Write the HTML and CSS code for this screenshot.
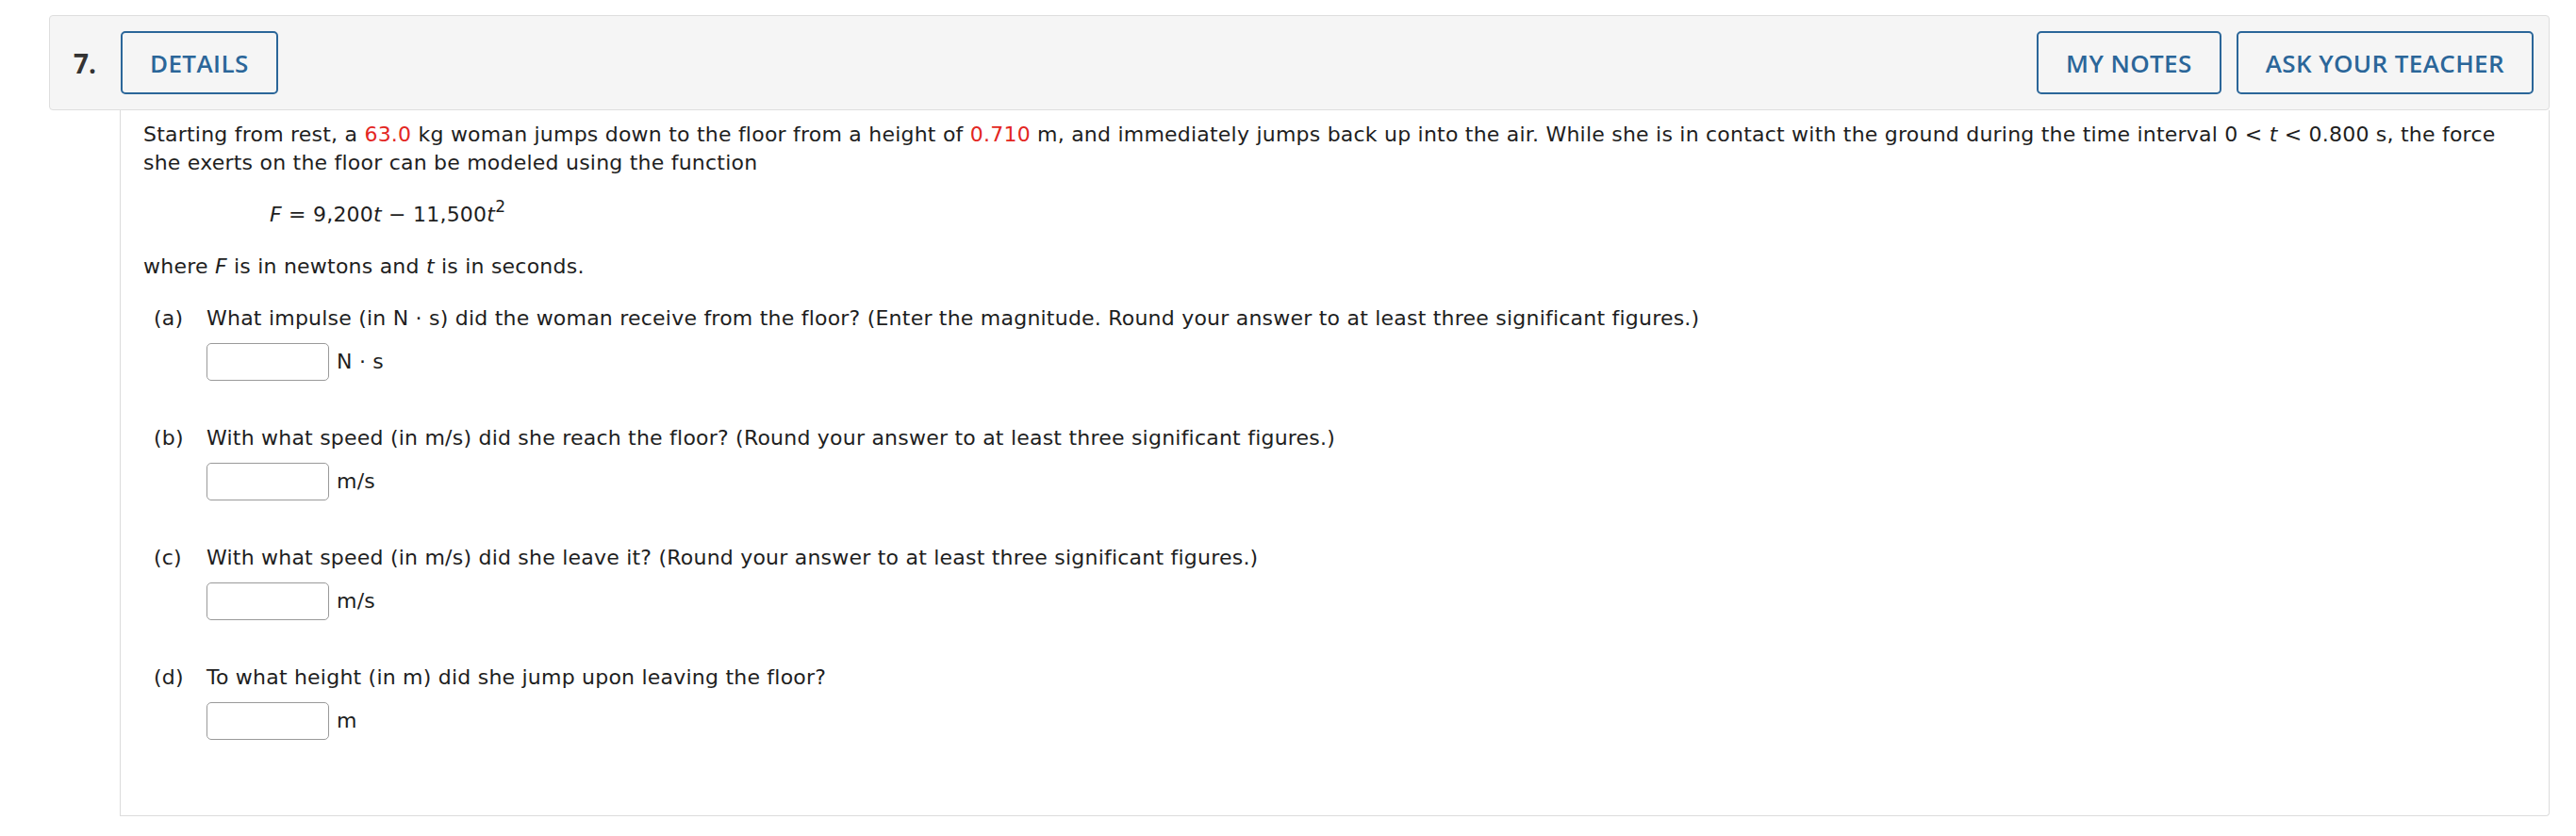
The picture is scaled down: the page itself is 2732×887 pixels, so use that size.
FILE: index.html
```html
<!DOCTYPE html>
<html lang="en">
<head>
<meta charset="utf-8">
<title>Question 7</title>
<link rel="stylesheet" href="styles.css">
</head>
<body>
<div class="question">
  <div class="q-header">
    <div class="q-num">7.</div>
    <button class="q-btn">DETAILS</button>
    <div class="q-actions">
      <button class="q-btn">MY NOTES</button>
      <button class="q-btn">ASK YOUR TEACHER</button>
    </div>
  </div>
  <div class="q-body">
    <p class="q-text">Starting from rest, a <span class="red">63.0</span> kg woman jumps down to the floor from a height of <span class="red">0.710</span> m, and immediately jumps back up into the air. While she is in contact with the ground during the time interval 0 &lt; <i>t</i> &lt; 0.800 s, the force she exerts on the floor can be modeled using the function</p>
    <p class="q-formula"><i>F</i> = 9,200<i>t</i> − 11,500<i>t</i><sup>2</sup></p>
    <p class="q-text">where <i>F</i> is in newtons and <i>t</i> is in seconds.</p>

    <div class="part">
      <div class="part-q"><span class="part-label">(a)</span><span class="part-text">What impulse (in N · s) did the woman receive from the floor? (Enter the magnitude. Round your answer to at least three significant figures.)</span></div>
      <div class="answer"><input class="ans-input" type="text"><span class="unit">N · s</span></div>
    </div>
    <div class="part">
      <div class="part-q"><span class="part-label">(b)</span><span class="part-text">With what speed (in m/s) did she reach the floor? (Round your answer to at least three significant figures.)</span></div>
      <div class="answer"><input class="ans-input" type="text"><span class="unit">m/s</span></div>
    </div>
    <div class="part">
      <div class="part-q"><span class="part-label">(c)</span><span class="part-text">With what speed (in m/s) did she leave it? (Round your answer to at least three significant figures.)</span></div>
      <div class="answer"><input class="ans-input" type="text"><span class="unit">m/s</span></div>
    </div>
    <div class="part">
      <div class="part-q"><span class="part-label">(d)</span><span class="part-text">To what height (in m) did she jump upon leaving the floor?</span></div>
      <div class="answer"><input class="ans-input" type="text"><span class="unit">m</span></div>
    </div>
  </div>
</div>
</body>
</html>
```

FILE: styles.css
```css
html, body {
  margin: 0;
  padding: 0;
  background: #ffffff;
}

body {
  padding: 16px 28px 0 52px;
  font-family: "DejaVu Sans", Verdana, sans-serif;
  font-size: 22px;
  line-height: 30px;
  letter-spacing: 0.22px;
  color: #1e1e1e;
}

.question {
  display: flex;
  flex-direction: column;
}

.q-header {
  display: flex;
  align-items: center;
  background: #f5f5f5;
  border: 1px solid #dedede;
  border-radius: 4px;
  padding: 16px 16px 16px 0;
}

.q-num {
  width: 75px;
  box-sizing: border-box;
  padding-left: 25px;
  font-family: "Open Sans", "Liberation Sans", sans-serif;
  font-weight: 700;
  font-size: 28px;
  letter-spacing: 0;
  color: #333333;
}

.q-actions {
  margin-left: auto;
  display: flex;
  gap: 16px;
}

.q-btn {
  height: 67px;
  box-sizing: border-box;
  padding: 0 29px;
  background: transparent;
  border: 2.5px solid #2b6699;
  border-radius: 5px;
  font-family: "Open Sans", "Liberation Sans", sans-serif;
  font-weight: 600;
  font-size: 26px;
  letter-spacing: 0.4px;
  color: #2b6699;
  cursor: pointer;
}

.q-body {
  margin-left: 75px;
  border: 1px solid #dcdcdc;
  border-top: none;
  border-radius: 0 0 4px 0;
  padding: 11px 24px 80px 24px;
}

.q-text {
  margin: 0 0 25px 0;
}

.q-formula {
  margin: 0 0 25px 134px;
}

.q-formula sup {
  font-size: 17px;
  line-height: 0;
  vertical-align: 10px;
}

.red {
  color: #e3261f;
}

.part {
  padding-left: 11px;
  margin-bottom: 46px;
}

.part:last-child {
  margin-bottom: 0;
}

.part-q {
  display: flex;
}

.part-label {
  width: 56px;
  flex: none;
}

.answer {
  display: flex;
  align-items: center;
  margin: 11px 0 0 56px;
}

.ans-input {
  width: 130px;
  height: 40px;
  box-sizing: border-box;
  border: 1.5px solid #9a9a9a;
  border-radius: 5px;
  background: #ffffff;
  margin: 0;
}

.unit {
  margin-left: 8px;
}
```
